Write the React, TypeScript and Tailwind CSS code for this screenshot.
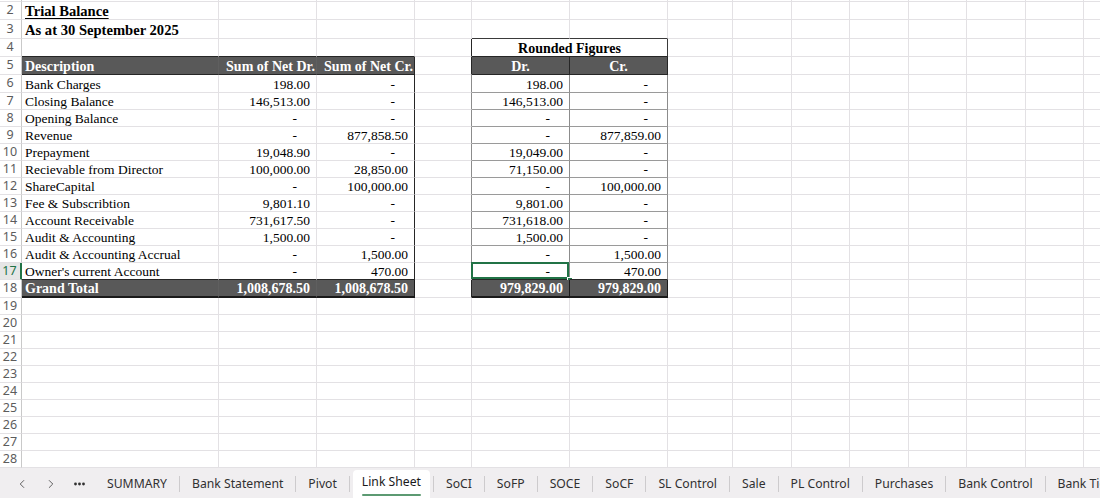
import React from 'react';
import { ChevronLeft, ChevronRight } from 'lucide-react';

type Row = { n: number; h: string };

const COLS = [
  'w-[197px]',
  'w-[98px]',
  'w-[98px]',
  'w-[57px]',
  'w-[98px]',
  'w-[98px]',
  'w-[65px]',
  'w-[59px]',
  'w-[58px]',
  'w-[59px]',
  'w-[58px]',
  'w-[59px]',
  'w-[58px]',
  'w-[59px]',
];

const DATA: [string, string, string, string, string][] = [
  ['Bank Charges', '198.00', '-', '198.00', '-'],
  ['Closing Balance', '146,513.00', '-', '146,513.00', '-'],
  ['Opening Balance', '-', '-', '-', '-'],
  ['Revenue', '-', '877,858.50', '-', '877,859.00'],
  ['Prepayment', '19,048.90', '-', '19,049.00', '-'],
  ['Recievable from Director', '100,000.00', '28,850.00', '71,150.00', '-'],
  ['ShareCapital', '-', '100,000.00', '-', '100,000.00'],
  ['Fee & Subscribtion', '9,801.10', '-', '9,801.00', '-'],
  ['Account Receivable', '731,617.50', '-', '731,618.00', '-'],
  ['Audit & Accounting', '1,500.00', '-', '1,500.00', '-'],
  ['Audit & Accounting Accrual', '-', '1,500.00', '-', '1,500.00'],
  ["Owner's current Account", '-', '470.00', '-', '470.00'],
];

const ROWS: Row[] = [
  { n: 1, h: 'h-[2px]' },
  { n: 2, h: 'h-[18px]' },
  { n: 3, h: 'h-[19px]' },
  { n: 4, h: 'h-[18px]' },
  { n: 5, h: 'h-[18px]' },
  { n: 6, h: 'h-[18px]' },
  ...Array.from({ length: 11 }, (_, i) => ({ n: 7 + i, h: 'h-[17px]' })),
  { n: 18, h: 'h-[18px]' },
  ...Array.from({ length: 10 }, (_, i) => ({ n: 19 + i, h: 'h-[17px]' })),
];

const TABS = [
  'SUMMARY',
  'Bank Statement',
  'Pivot',
  'Link Sheet',
  'SoCI',
  'SoFP',
  'SOCE',
  'SoCF',
  'SL Control',
  'Sale',
  'PL Control',
  'Purchases',
  'Bank Control',
  'Bank Tie',
];

const base = 'shrink-0 h-full border-r border-b flex items-end whitespace-nowrap leading-[15px] relative';
const grid = 'border-[#e3e1e4]';
const dark = 'bg-[#595959] text-white font-bold text-[14px]';

function Num({ v }: { v: string }) {
  return v === '-' ? (
    <span className="ml-auto pr-[19px]">-</span>
  ) : (
    <span className="ml-auto pr-[6px]">{v}</span>
  );
}

function Cell({ r, c }: { r: number; c: number }) {
  const w = COLS[c];
  // title rows
  if (c === 0 && r === 2)
    return (
      <div className={`${base} ${grid} ${w} pl-[3px] text-[14.6px] font-bold`}>
        <span className="underline underline-offset-2">Trial Balance</span>
      </div>
    );
  if (c === 0 && r === 3)
    return <div className={`${base} ${grid} ${w} pl-[3px] text-[14.6px] font-bold`}>As at 30 September 2025</div>;

  // left table header
  if (r === 5 && c <= 2) {
    const label = ['Description', 'Sum of Net Dr.', 'Sum of Net Cr.'][c];
    return (
      <div
        className={`${base} ${w} ${dark} border-b-[#262626] ${
          c === 2 ? 'border-r-[#262626]' : 'border-r-[#5f5f5f]'
        } ${c === 0 ? 'pl-[3px]' : 'justify-end pr-[1px]'}`}
      >
        {label}
      </div>
    );
  }
  // grand total
  if (r === 18 && c <= 2) {
    const label = ['Grand Total', '1,008,678.50', '1,008,678.50'][c];
    return (
      <div
        className={`${base} ${w} ${dark} border-b-2 border-b-[#1a1a1a] ${
          c === 2 ? 'border-r-[#1a1a1a]' : 'border-r-[#5f5f5f]'
        } ${c === 0 ? 'pl-[3px]' : 'justify-end pr-[6px]'}`}
      >
        {label}
      </div>
    );
  }
  // left table body
  if (r >= 6 && r <= 17 && c <= 2) {
    const v = DATA[r - 6][c];
    const bb = r === 17 ? 'border-b-[#262626]' : '';
    if (c === 0) return <div className={`${base} ${grid} ${w} ${bb} pl-[3px]`}>{v}</div>;
    return (
      <div className={`${base} ${grid} ${w} ${bb} ${c === 2 ? 'border-r-[#262626]' : ''}`}>
        <Num v={v} />
      </div>
    );
  }
  if (r === 4 && c <= 2) return <div className={`${base} ${grid} ${w} border-b-[#262626]`} />;

  // rounded figures block
  if (c === 3 && (r === 4 || r === 5 || r === 18)) return <div className={`${base} ${grid} ${w} border-r-[#262626]`} />;
  if (c === 3 && r >= 6 && r <= 17) return <div className={`${base} ${grid} ${w} border-r-[#8c8c8c]`} />;
  if (r === 3 && (c === 4 || c === 5)) return <div className={`${base} ${grid} ${w} border-b-[#3a3a3a]`} />;
  if (r === 4 && c === 4)
    return (
      <div className={`${base} w-[196px] border-r-[#3a3a3a] border-b-[#262626] justify-center font-bold text-[14px]`}>
        Rounded Figures
      </div>
    );
  if (r === 4 && c === 5) return null;
  if (r === 5 && (c === 4 || c === 5))
    return (
      <div className={`${base} ${w} ${dark} justify-center border-b-[#262626] border-r-[#262626]`}>
        {c === 4 ? 'Dr.' : 'Cr.'}
      </div>
    );
  if (r >= 6 && r <= 17 && (c === 4 || c === 5)) {
    const v = DATA[r - 6][c - 1];
    return (
      <div className={`${base} ${w} border-r-[#8c8c8c] ${r === 17 ? 'border-b-[#262626]' : 'border-b-[#9a9a9a]'}`}>
        <Num v={v} />
        {r === 17 && c === 4 && (
          <>
            <div className="absolute -left-[1px] -top-[1px] right-0 bottom-0 border-2 border-[#217346]" />
            <div className="absolute -right-[4px] -bottom-[4px] w-[6px] h-[6px] bg-[#217346] border border-white" />
          </>
        )}
      </div>
    );
  }
  if (r === 18 && (c === 4 || c === 5))
    return (
      <div className={`${base} ${w} ${dark} justify-end pr-[6px] border-b-2 border-b-[#1a1a1a] border-r-[#1a1a1a]`}>
        979,829.00
      </div>
    );

  return <div className={`${base} ${grid} ${w}`} />;
}

function Sheet() {
  return (
    <div className="flex-1 overflow-hidden font-['Liberation_Serif','Times_New_Roman',serif] text-[13.5px] text-black">
      {ROWS.map((row) => (
        <div key={row.n} className={`flex ${row.h}`}>
          <div
            className={`shrink-0 w-[22px] h-full border-b border-[#e3e1e4] border-r flex items-center justify-center pr-[1px] font-['Noto_Sans',sans-serif] text-[12.5px] overflow-hidden ${
              row.n === 17
                ? 'text-[#217346] border-r-2 border-r-[#217346] bg-[#e6e6e6]'
                : 'text-[#5c5c5c] border-r-[#c9c9c9]'
            }`}
          >
            {row.n > 1 ? row.n : ''}
          </div>
          {COLS.map((_, c) => (
            <Cell key={c} r={row.n} c={c} />
          ))}
        </div>
      ))}
    </div>
  );
}

function TabBar() {
  return (
    <div className="h-[30px] shrink-0 bg-[#f0eef0] flex items-stretch font-['Noto_Sans','Open_Sans',sans-serif] text-[12.2px] text-[#303030] overflow-hidden whitespace-nowrap">
      <div className="flex items-center pl-[7px] pt-[2px] w-[95px] shrink-0 text-[#404040]">
        <div className="w-[29px] flex justify-center">
          <ChevronLeft size={14} strokeWidth={1.4} />
        </div>
        <div className="w-[29px] flex justify-center">
          <ChevronRight size={14} strokeWidth={1.4} />
        </div>
        <div className="w-[29px] flex justify-center">
          <svg width="11" height="4" viewBox="0 0 11 4">
            <circle cx="1.5" cy="2" r="1.4" fill="#303030" />
            <circle cx="5.5" cy="2" r="1.4" fill="#303030" />
            <circle cx="9.5" cy="2" r="1.4" fill="#303030" />
          </svg>
        </div>
      </div>
      {TABS.map((t, i) => (
        <React.Fragment key={t}>
          {i > 0 && <div className="w-px h-[16px] self-center mt-[2px] bg-[#cdcbcd] shrink-0" />}
          {t === 'Link Sheet' ? (
            <div className="px-[3px] flex shrink-0">
              <div className="mt-[2px] px-[9px] bg-white rounded-t-[4px] flex items-center relative text-[#1a1a1a] pb-[3px]">
                <span className="relative">
                  {t}
                  <span className="absolute left-0 right-0 -bottom-[4px] h-[2px] bg-[#5c9a72] rounded" />
                </span>
              </div>
            </div>
          ) : (
            <div className="px-[12px] pt-[3px] flex items-center shrink-0">{t}</div>
          )}
        </React.Fragment>
      ))}
    </div>
  );
}

export default function App() {
  return (
    <div className="w-[1100px] h-[498px] bg-white flex flex-col overflow-hidden">
      <Sheet />
      <TabBar />
    </div>
  );
}
